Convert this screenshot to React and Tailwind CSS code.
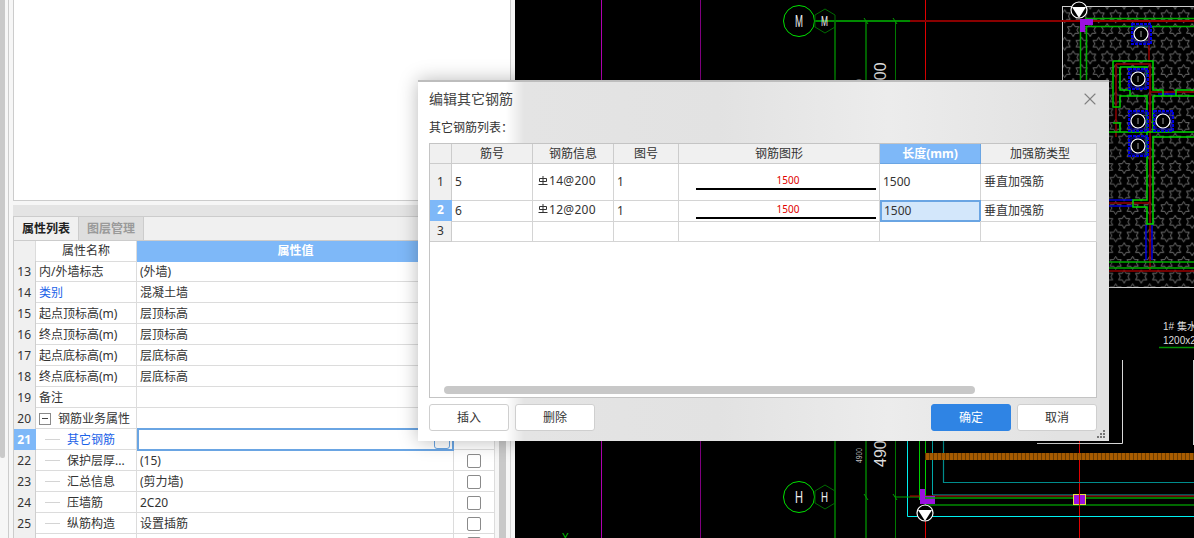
import React from 'react';
import { X } from 'lucide-react';

const font = { fontFamily: '"Noto Sans", "Noto Sans CJK SC", sans-serif' };

const props = [
  { no: '13', name: '内/外墙标志', value: '(外墙)' },
  { no: '14', name: '类别', value: '混凝土墙', link: true },
  { no: '15', name: '起点顶标高(m)', value: '层顶标高' },
  { no: '16', name: '终点顶标高(m)', value: '层顶标高' },
  { no: '17', name: '起点底标高(m)', value: '层底标高' },
  { no: '18', name: '终点底标高(m)', value: '层底标高' },
  { no: '19', name: '备注', value: '' },
  { no: '20', name: '钢筋业务属性', value: '', group: true },
  { no: '21', name: '其它钢筋', value: '', child: true, active: true },
  { no: '22', name: '保护层厚...', value: '(15)', child: true, check: true },
  { no: '23', name: '汇总信息', value: '(剪力墙)', child: true, check: true },
  { no: '24', name: '压墙筋', value: '2C20', child: true, check: true },
  { no: '25', name: '纵筋构造', value: '设置插筋', child: true, check: true },
  { no: '', name: '', value: '', check: true },
];

const rebars = [
  { no: 1, bar: '5', info: '14@200', fig: '1', len: '1500', type: '垂直加强筋', tall: true },
  { no: 2, bar: '6', info: '12@200', fig: '1', len: '1500', type: '垂直加强筋', current: true },
  { no: 3, bar: '', info: '', fig: '', len: '', type: '' },
];

const tableCols = 'grid grid-cols-[22px_81px_81px_65px_201px_101px_116px]';
const propCols = 'grid grid-cols-[22px_101px_317px_41px]';

// 六角星填充
const starPath = (cx, cy, r) => {
  const pts = [];
  for (let i = 0; i < 12; i++) {
    const rad = i % 2 === 0 ? r : r * 0.58;
    const a = (Math.PI / 6) * i - Math.PI / 2;
    pts.push(`${(cx + rad * Math.cos(a)).toFixed(1)},${(cy + rad * Math.sin(a)).toFixed(1)}`);
  }
  return `M${pts.join('L')}Z`;
};

const Column = ({ cx, cy }) => (
  <g>
    <rect x={cx - 9} y={cy - 10} width="19" height="20" fill="none" stroke="#0000e0" strokeWidth="2" strokeDasharray="3 1" />
    <rect x={cx - 7} y={cy - 8} width="15" height="16" fill="none" stroke="#0000c0" strokeWidth="1" />
    <circle cx={cx} cy={cy} r="7" fill="#000" stroke="#fff" strokeWidth="1.2" />
    <path d={`M${cx} ${cy - 3}V${cy + 3}`} stroke="#999" strokeWidth="1" />
  </g>
);

const Axis = ({ y, label }) => (
  <g>
    <circle cx="799" cy={y} r="15.5" fill="none" stroke="#00e000" strokeWidth="1" />
    <path d={`M825 ${y - 12}L835 ${y - 6}V${y + 6}L825 ${y + 12}L815 ${y + 6}V${y - 6}Z`} fill="none" stroke="#006a00" strokeWidth="1" />
    <text x="795" y={y + 6} fill="#eee" fontSize="17" textLength="8" lengthAdjust="spacingAndGlyphs" fontFamily="Liberation Sans">{label}</text>
    <text x="821" y={y + 5} fill="#eee" fontSize="15" textLength="7" lengthAdjust="spacingAndGlyphs" fontFamily="Liberation Sans">{label}</text>
    <path d={`M864 ${y - 3}L868 ${y + 3}M893 ${y - 3}L897 ${y + 3}`} stroke="#00a000" strokeWidth="1" />
  </g>
);

const Marker = ({ cx, y }) => (
  <g>
    <circle cx={cx} cy={y} r="8" fill="#000" stroke="#fff" strokeWidth="1.2" />
    <path d={`M${cx - 7} ${y - 3}H${cx + 7}L${cx} ${y + 8}Z`} fill="#fff" />
  </g>
);

const Drawing = () => (
  <svg viewBox="515 0 679 538" width="679" height="538" className="block">
    <defs>
      <pattern id="stars" x="1158.2" y="146.45" width="17" height="27.4" patternUnits="userSpaceOnUse">
        <path d={starPath(8.5, 6.85, 6.5)} fill="none" stroke="#7c7c7c" strokeWidth="0.9" />
        <path d={starPath(0, 20.55, 6.5)} fill="none" stroke="#7c7c7c" strokeWidth="0.9" />
        <path d={starPath(17, 20.55, 6.5)} fill="none" stroke="#7c7c7c" strokeWidth="0.9" />
      </pattern>
      <pattern id="rope" x="925" y="453" width="4" height="7" patternUnits="userSpaceOnUse">
        <rect width="4" height="7" fill="#a85c00" />
        <rect width="1" height="7" fill="#6e3d00" />
      </pattern>
    </defs>

    <path d="M601.500 0V538" stroke="#b000b0" />
    <path d="M700.500 0V538" stroke="#800080" />

    {/* 轴线 */}
    <path d="M835 21V90M866 21V90M835 430V538M866 430V538" stroke="#00c000" strokeWidth="1" />
    <path d="M895.500 21V90M895.500 430V538" stroke="#007a00" strokeWidth="1" />
    <path d="M925.500 0V90" stroke="#e00000" />
    <path d="M1079.500 430V538M925.500 505V538" stroke="#e00000" />
    <path d="M815 21H910" stroke="#008a00" strokeWidth="2" />
    <path d="M910 21H1194" stroke="#8a0000" strokeWidth="2" />
    <Axis y={21} label="M" />
    <Axis y={497} label="H" />

    {/* 标注 */}
    <text transform="translate(886 98) rotate(-90)" fill="#ddd" fontSize="16" fontFamily="Liberation Sans">4900</text>
    <text transform="translate(886 467) rotate(-90)" fill="#ddd" fontSize="16" fontFamily="Liberation Sans">4900</text>
    <text transform="translate(862 94) rotate(-90)" fill="#bbb" fontSize="9" textLength="15" lengthAdjust="spacingAndGlyphs" fontFamily="Liberation Sans">4900</text>
    <text transform="translate(862 463) rotate(-90)" fill="#bbb" fontSize="9" textLength="15" lengthAdjust="spacingAndGlyphs" fontFamily="Liberation Sans">4900</text>
    <text x="562" y="541" fill="#00c000" fontSize="10" fontFamily="Liberation Sans">Y</text>

    {/* 集水坑 */}
    <rect x="1062.500" y="6.500" width="140" height="281" fill="url(#stars)" stroke="#ccc" />
    <path d="M1062 21H1194" stroke="#9a0000" strokeWidth="2" />
    <path d="M1085 18.500H1194M1086 26.500H1194M1080.500 26V90M1086.500 26V90" stroke="#00b000" strokeWidth="1.500" />
    <path d="M1149 26V62M1116 64H1150V270M1116 64V137M1150 92H1194M1109 203H1149" fill="none" stroke="#9a0000" strokeWidth="1.500" />
    <path d="M1109 200H1133M1109 206H1133M1146 225V260M1152 225V260M1158 94H1176" fill="none" stroke="#0000e0" strokeWidth="1.500" />
    <path d="M1113 61H1153V90H1163V96H1176V90H1194M1113 61V107H1120V96H1147V200H1133V207H1147V224H1153V137H1194M1153 96H1194M1109 132H1194M1113 123H1120V132M1120 67H1147V77M1120 67V90H1130V96M1153 96V132" fill="none" stroke="#00d800" strokeWidth="1.500" />
    <path d="M1109 262H1194M1109 268H1194" stroke="#00b000" strokeWidth="1.500" />
    <path d="M1109 271H1194" stroke="#9a0000" strokeWidth="1.500" />
    <path d="M1080 19H1093V25H1085V32H1080Z" fill="#9a10e0" />
    <Marker cx={1079} y={10} />
    <Column cx={1141} cy={34} />
    <Column cx={1138} cy={79} />
    <Column cx={1138} cy={121} />
    <Column cx={1163} cy={121} />
    <Column cx={1138} cy={146} />

    <text x="1163" y="330" fill="#ddd" fontSize="10" fontFamily="Liberation Sans, Noto Sans CJK SC">1# 集水坑</text>
    <text x="1163" y="344" fill="#ddd" fontSize="10" fontFamily="Liberation Sans">1200x2400</text>
    <path d="M1159 347.500H1194" stroke="#009000" strokeWidth="1.500" />
    <path d="M1037 443.500H1122.500V360" fill="none" stroke="#ddd" />
    <path d="M1193.500 360V445" stroke="#ddd" />

    {/* 底部梁线 */}
    <path d="M907.500 430V516.500H1194" fill="none" stroke="#00f0f0" />
    <path d="M943.500 430V482.500H1194" fill="none" stroke="#008c8c" strokeWidth="1.200" />
    <path d="M932.500 430V495H1194" fill="none" stroke="#00a8a8" strokeWidth="1" />
    <path d="M919.500 430V500M925.500 430V505H1194" fill="none" stroke="#00d000" />
    <rect x="925" y="453" width="269" height="7" fill="url(#rope)" />
    <path d="M895 497H925" stroke="#00a000" />
    <path d="M910 496H1194" stroke="#c00000" />
    <path d="M920 489H925V496H935V504H920Z" fill="#9a10e0" />
    <path d="M925 498H1194" stroke="#00a000" strokeWidth="1.500" />
    <rect x="1073.500" y="494.500" width="12" height="10" fill="#9a10e0" stroke="#e8e040" />
    <path d="M1079.500 494V505" stroke="#e00000" />
    <Marker cx={925} y={513} />
  </svg>
);

const PropRow = ({ row }) => (
  <div className={`${propCols} h-[21px] shrink-0 border-b border-[#dcdcdc] text-[12px] leading-[21px] text-[#333]`}>
    <div className={`border-r pr-[4px] text-right ${row.active ? 'border-[#7eb8f8] bg-[#7eb8f8] font-bold text-white' : 'border-[#cfcfcf] bg-[#f0f0f0]'}`}>{row.no}</div>
    <div className={`flex min-w-0 items-center border-r border-[#dcdcdc] pl-[3px] ${row.link || row.active ? 'text-[#1a62e8]' : ''}`}>
      {row.group && (
        <span className="mr-[7px] flex h-[12px] w-[12px] items-center justify-center border border-[#8a8a8a] leading-none">
          <span className="h-px w-[6px] bg-[#444]" />
        </span>
      )}
      {row.child && <span className="ml-[6px] mr-[7px] h-px w-[15px] bg-[#d4d4d4]" />}
      <span className="whitespace-nowrap">{row.name}</span>
    </div>
    {row.active ? (
      <div className="relative -my-px border-2 border-[#6aa5e3] bg-white">
        <span className="absolute bottom-0 right-[2px] h-[14px] w-[16px] rounded-[3px] border border-[#6aa5e3]" />
      </div>
    ) : (
      <div className="border-r border-[#dcdcdc] pl-[3px]">{row.value}</div>
    )}
    <div className="flex items-center justify-center border-r border-[#dcdcdc]">
      {row.check && <span className="h-[14px] w-[14px] rounded-[2px] border border-[#8a8a8a] bg-white" />}
    </div>
  </div>
);

const PropertyPanel = () => (
  <div className="flex h-[538px] w-[515px] shrink-0 overflow-hidden bg-[#f6f6f6]">
    <div className="h-[458px] w-[5px] shrink-0 rounded-b-[2px] bg-[#c9c9c9]" />
    <div className="w-[3px] shrink-0" />
    <div className="w-[5px] shrink-0 border-l border-[#cccccc]" />
    <div className="flex w-[498px] shrink-0 flex-col">
      <div className="h-[201px] shrink-0 border-b border-l border-r border-[#cccccc] bg-white" />
      <div className="mt-[4px] h-[12px] shrink-0 border-b border-[#cccccc] bg-[#e4e4e4]" />
      <div className="flex h-[23px] shrink-0 border-l border-[#cccccc] bg-[#f0f0f0] text-[12px] leading-[23px]">
        <div className="w-[65px] border-r border-[#cccccc] text-center font-bold text-[#222]">属性列表</div>
        <div className="w-[65px] border-r border-[#cccccc] bg-[#dedede] text-center font-bold text-[#9a9a9a]">图层管理</div>
      </div>
      <div className="flex shrink-0">
        <div className="w-[482px] border-l border-[#cccccc] bg-white">
          <div className={`${propCols} h-[21px] border-t border-[#cccccc] text-center text-[12px] leading-[20px] text-[#333]`}>
            <div className="border-b border-r border-[#dcdcdc] bg-[#f0f0f0]" />
            <div className="border-b border-r border-[#dcdcdc]">属性名称</div>
            <div className="bg-[#7eb8f8] font-bold text-white">属性值</div>
            <div className="border-b border-r border-[#dcdcdc]">附加</div>
          </div>
          {props.map((row, i) => <PropRow key={i} row={row} />)}
        </div>
        <div className="ml-[4px] h-[298px] w-[8px] bg-[#c8c8c8]" />
        <div className="ml-[4px] h-[298px] w-px bg-[#d4d4d4]" />
      </div>
    </div>
  </div>
);

const RebarMark = () => (
  <svg width="10" height="10" viewBox="0 0 10 10" className="ml-[2px] mr-px -mt-[3px] shrink-0">
    <path d="M5 0V8.500M0.500 8.500H9.500M1.500 5.500V2.500H8.500V5.500H1.500" fill="none" stroke="#333" strokeWidth="1" />
  </svg>
);

const HeaderCell = ({ children, active }) => (
  <div className={`border-b border-r text-center text-[12px] leading-[19px] ${active ? 'border-[#6aa5e3] bg-[#7eb8f8] font-bold text-white' : 'border-[#cccccc] bg-[#f0f0f0] text-[#333]'}`}>{children}</div>
);

const RebarRow = ({ row }) => {
  const cell = 'flex items-center border-b border-r border-[#d4d4d4] pl-[3px]';
  return (
    <div className={`${tableCols} ${row.tall ? 'h-[36px]' : 'h-[21px]'} shrink-0 text-[12px] text-[#333]`}>
      <div className={`border-b border-r text-center ${row.tall ? 'leading-[36px]' : 'leading-[20px]'} ${row.current ? 'border-[#7eb8f8] bg-[#7eb8f8] font-bold text-white' : 'border-[#cccccc] bg-[#f0f0f0]'}`}>{row.no}</div>
      <div className={cell}>{row.bar}</div>
      <div className={cell}>
        {row.info && <RebarMark />}
        {row.info && <span className="-mt-[2px] tracking-[0.3px]">{row.info}</span>}
      </div>
      <div className={cell}>{row.fig}</div>
      <div className="border-b border-r border-[#d4d4d4]">
        {row.len && (
          <div className={`ml-[17px] flex h-full w-[180px] flex-col justify-end ${row.tall ? 'pb-[10px]' : 'pb-[2px]'}`}>
            <span className="mb-[2px] pl-[4px] text-center text-[10px] leading-[12px] text-[#e00000]">{row.len}</span>
            <span className="h-[2px] bg-black" />
          </div>
        )}
      </div>
      <div className={row.current ? 'flex items-center border-2 border-[#6aa5e3] bg-[#d3e7fb] pl-[2px]' : cell}>{row.len}</div>
      <div className={cell}>{row.type}</div>
    </div>
  );
};

const Button = ({ children, primary }) => (
  <button className={`h-[27px] w-[80px] rounded-[3px] border text-[12px] ${primary ? 'border-[#2f84e4] bg-[#2f84e4] text-white' : 'border-[#cfcfcf] bg-white text-[#333]'}`}>{children}</button>
);

const RebarDialog = () => (
  <div className="absolute left-[418px] top-[80px] flex h-[361px] w-[691px] flex-col border-t-2 border-[#bdbdbd] bg-[linear-gradient(90deg,#ffffff_88px,#e4e4e4_106px,#e2e2e2_300px,#ececec_470px,#e2e2e2_640px)] px-[11px] shadow-[0_0_18px_rgba(0,0,0,0.28)]">
    <div className="flex h-[33px] items-center justify-between">
      <span className="text-[14px] text-[#444]">编辑其它钢筋</span>
      <X size={20} strokeWidth={1.3} className="mr-[-2px] text-[#808080]" />
    </div>
    <div className="h-[28px] pt-[3px] text-[12px] leading-[20px] text-[#333]">其它钢筋列表：</div>
    <div className="flex h-[255px] w-[668px] flex-col border-l border-t border-[#c4c4c4] bg-white">
      <div className={`${tableCols} h-[20px] shrink-0`}>
        <HeaderCell />
        <HeaderCell>筋号</HeaderCell>
        <HeaderCell>钢筋信息</HeaderCell>
        <HeaderCell>图号</HeaderCell>
        <HeaderCell>钢筋图形</HeaderCell>
        <HeaderCell active>长度(mm)</HeaderCell>
        <div className="border-b border-r border-[#cccccc] bg-[#f0f0f0] pl-[3px] text-center text-[12px] leading-[19px] text-[#333]">加强筋类型</div>
      </div>
      {rebars.map((row) => <RebarRow key={row.no} row={row} />)}
      <div className="flex flex-1 flex-col justify-end border-b border-r border-[#c4c4c4] pb-[3px] pl-[14px]">
        <div className="h-[8px] w-[531px] rounded-full bg-[#c8c8c8]" />
      </div>
    </div>
    <div className="mt-[6px] flex w-[668px] gap-[6px]">
      <Button>插入</Button>
      <Button>删除</Button>
      <div className="flex-1" />
      <Button primary>确定</Button>
      <Button>取消</Button>
    </div>
    <svg width="8" height="8" viewBox="0 0 8 8" className="absolute bottom-[3px] right-[4px]">
      <path d="M6 0h2v2H6zM3 3h2v2H3zM6 3h2v2H6zM0 6h2v2H0zM3 6h2v2H3zM6 6h2v2H6z" fill="#777" />
    </svg>
  </div>
);

export default function App() {
  return (
    <div className="relative flex h-[538px] w-[1194px] overflow-hidden bg-black" style={font}>
      <PropertyPanel />
      <div className="flex-1 bg-black">
        <Drawing />
      </div>
      <RebarDialog />
    </div>
  );
}
